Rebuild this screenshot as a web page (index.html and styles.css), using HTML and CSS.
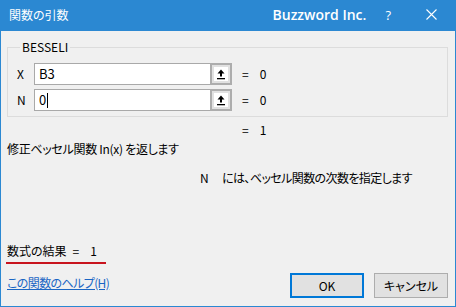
FILE: index.html
```html
<!DOCTYPE html>
<html lang="ja">
<head>
<meta charset="utf-8">
<link rel="stylesheet" href="styles.css">
</head>
<body>
<div class="window">
  <div class="titlebar">
    <span class="title">関数の引数</span>
    <span class="brand">Buzzword Inc.</span>
    <span class="help">?</span>
    <span class="close"><svg width="11" height="11" viewBox="0 0 11 11"><path d="M0.5 0.5 L10.5 10.5 M10.5 0.5 L0.5 10.5" stroke="#fff" stroke-width="1.1" fill="none"/></svg></span>
  </div>
  <div class="content">
    <fieldset class="group">
      <legend>BESSELI</legend>
      <div class="arg-row">
        <span class="arg-label">X</span>
        <div class="ref-input">
          <span class="ref-text">B3</span>
          <span class="ref-btn"><svg width="14" height="14" viewBox="0 0 14 14"><rect width="14" height="14" fill="#fff"/><path d="M7 2.5 L10.5 6.5 H8 V9.5 H6 V6.5 H3.5 Z" fill="#000"/><rect x="3" y="11" width="8" height="1.3" fill="#000"/></svg></span>
        </div>
        <span class="eq">=</span><span class="val">0</span>
      </div>
      <div class="arg-row">
        <span class="arg-label">N</span>
        <div class="ref-input">
          <span class="ref-text">0<span class="caret"></span></span>
          <span class="ref-btn"><svg width="14" height="14" viewBox="0 0 14 14"><rect width="14" height="14" fill="#fff"/><path d="M7 2.5 L10.5 6.5 H8 V9.5 H6 V6.5 H3.5 Z" fill="#000"/><rect x="3" y="11" width="8" height="1.3" fill="#000"/></svg></span>
        </div>
        <span class="eq">=</span><span class="val">0</span>
      </div>
    </fieldset>
    <div class="total"><span class="eq">=</span><span class="val">1</span></div>
    <div class="desc">修正ベッセル関数 In(x) を返します</div>
    <div class="arg-desc"><span class="arg-name">N</span>には、ベッセル関数の次数を指定します</div>
    <div class="footer">
      <div class="footer-left">
        <div class="result">数式の結果<span class="res-eq">=</span><span class="res-val">1</span></div>
        <a class="help-link" href="#">この関数のヘルプ(H)</a>
      </div>
      <div class="buttons">
        <button class="btn btn-default">OK</button>
        <button class="btn">キャンセル</button>
      </div>
    </div>
  </div>
</div>
</body>
</html>
```
FILE: styles.css
```css
* { box-sizing: border-box; }
html, body { margin: 0; padding: 0; }
body {
  font-family: "Noto Sans CJK JP", "Noto Sans", sans-serif;
  font-size: 12px;
  font-feature-settings: "palt";
  color: #000;
  background: #fff;
}
.window {
  width: 456px;
  height: 307px;
  background: #f0f0f0;
  border: 1px solid #2b88d2;
  border-top: 0;
  display: flex;
  flex-direction: column;
}
.titlebar {
  height: 31px;
  background: #2b88d2;
  color: #fff;
  display: flex;
  align-items: center;
  margin: 0 -1px;
  padding-left: 9px;
}
.title {
  font-size: 12px;
  line-height: 16px;
  flex: 1;
  margin-top: -1px;
}
.brand {
  font-family: "Open Sans", sans-serif;
  font-size: 14px;
  font-weight: 600;
  line-height: 16px;
  margin-right: 19px;
  margin-top: -2px;
}
.help {
  font-family: "Open Sans", sans-serif;
  font-size: 13px;
  margin-right: 35px;
  margin-top: -2px;
}
.close {
  display: flex;
  margin-right: 19px;
  margin-top: -2px;
}
.content {
  flex: 1;
  display: flex;
  flex-direction: column;
  padding: 8px 7px 0 6px;
}
.group {
  margin: 0;
  border: 1px solid #dcdcdc;
  padding: 8px 7px 5px 9px;
  min-width: 0;
}
.group legend {
  padding: 0 2px;
  margin-left: 3px;
  line-height: 16px;
}
.arg-row {
  display: flex;
  align-items: center;
  height: 22px;
}
.arg-row + .arg-row { margin-top: 4px; }
.arg-label {
  width: 17px;
  line-height: 16px;
}
.ref-input {
  width: 198px;
  height: 22px;
  display: flex;
}
.ref-text {
  flex: 1;
  background: #fff;
  border: 1px solid #a9a9a9;
  border-right: 0;
  padding-left: 4px;
  font-size: 13px;
  line-height: 20px;
  display: flex;
  align-items: center;
}
.caret {
  display: inline-block;
  width: 1px;
  height: 15px;
  background: #000;
  margin-left: 1px;
}
.ref-btn {
  width: 22px;
  height: 22px;
  background: #e1e1e1;
  border: 2px solid #adadad;
  display: flex;
  align-items: center;
  justify-content: center;
}
.eq {
  margin-left: 10px;
  line-height: 16px;
}
.val {
  margin-left: 11px;
  line-height: 16px;
}
.total {
  margin: 5px 0 0 225px;
  line-height: 16px;
}
.desc {
  margin-top: 3px;
  line-height: 16px;
  letter-spacing: -0.3px;
}
.arg-desc {
  margin: 13px 0 0 193px;
  line-height: 16px;
  letter-spacing: -0.6px;
}
.arg-name { margin-right: 14px; }
.footer {
  margin-top: 57px;
  display: flex;
  justify-content: space-between;
  align-items: flex-start;
}
.footer-left {
  display: flex;
  flex-direction: column;
  align-items: flex-start;
}
.result {
  line-height: 16px;
  padding: 0 9px 3px 1px;
  margin-left: -1px;
  border-bottom: 2px solid #c8141e;
}
.res-eq { margin-left: 6px; }
.res-val { margin-left: 11px; }
.help-link {
  margin-top: 11px;
  line-height: 16px;
  color: #1a66c4;
  text-decoration: underline;
  letter-spacing: -0.6px;
}
.buttons {
  display: flex;
  gap: 10px;
  margin-top: 30px;
}
.btn {
  width: 74px;
  height: 25px;
  font: inherit;
  font-size: 12px;
  background: #e1e1e1;
  border: 1px solid #adadad;
  padding: 0;
  color: #000;
}
.btn-default {
  border: 2px solid #0078d7;
}
```
